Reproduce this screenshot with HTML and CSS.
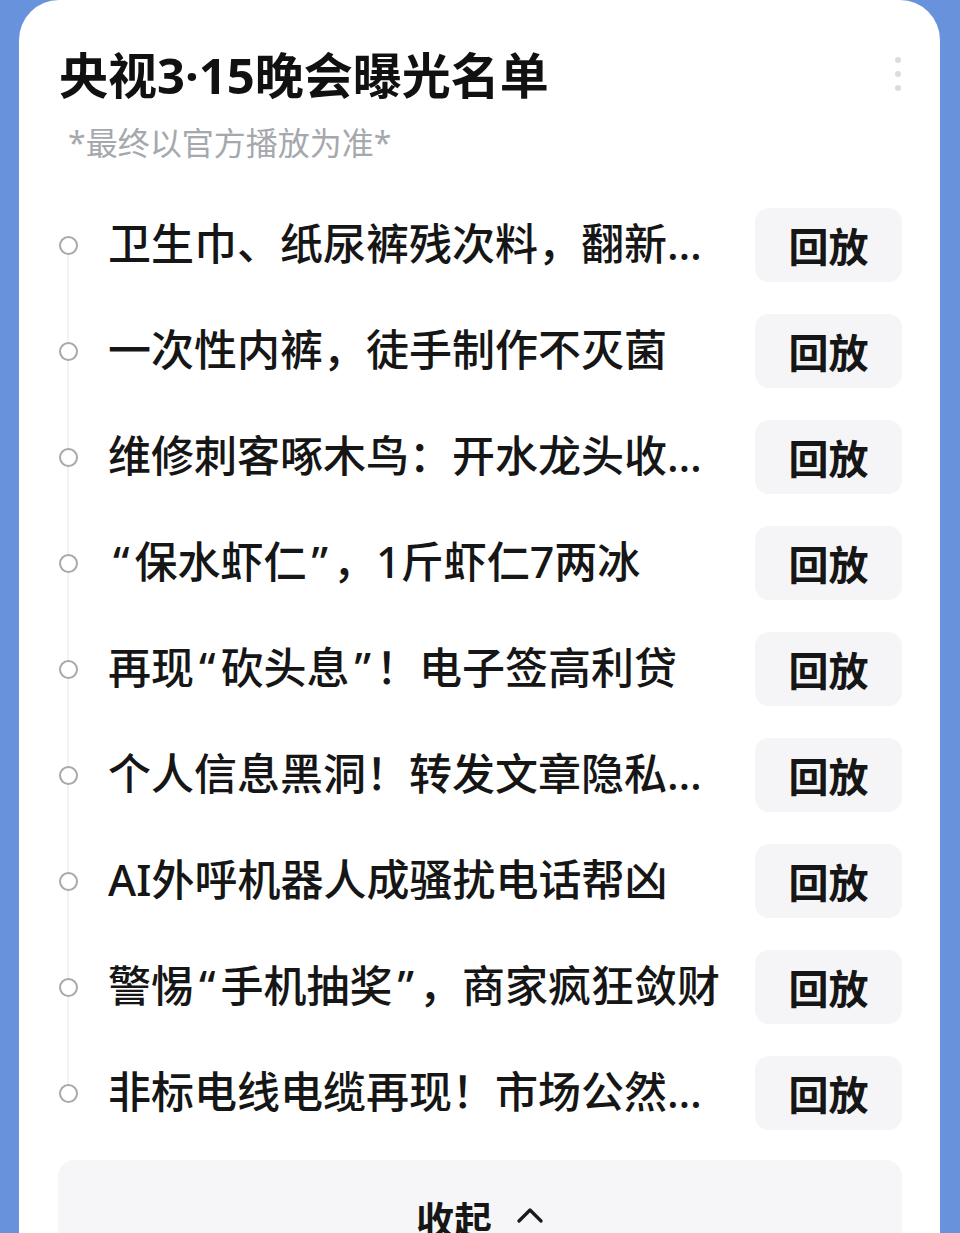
FILE: index.html
```html
<!DOCTYPE html>
<html lang="zh-CN">
<head>
    <meta charset="UTF-8">
    <meta name="viewport" content="width=device-width, initial-scale=1.0">
    <title>央视3·15晚会曝光名单</title>
    <link rel="stylesheet" href="styles.css">
</head>
<body>
    <div class="card">
        <div class="more">
            <span class="dot"></span>
            <span class="dot"></span>
            <span class="dot"></span>
        </div>
        <h1 class="title">央视3·15晚会曝光名单</h1>
        <p class="subtitle">*最终以官方播放为准*</p>

        <!-- 曝光条目 -->
        <ul class="list">
            <li class="item">
                <span class="bullet"></span>
                <span class="item-text">卫生巾、纸尿裤残次料，翻新再出售</span>
                <button class="replay">回放</button>
            </li>
            <li class="item">
                <span class="bullet"></span>
                <span class="item-text">一次性内裤，徒手制作不灭菌</span>
                <button class="replay">回放</button>
            </li>
            <li class="item">
                <span class="bullet"></span>
                <span class="item-text">维修刺客啄木鸟：开水龙头收费上千</span>
                <button class="replay">回放</button>
            </li>
            <li class="item">
                <span class="bullet"></span>
                <span class="item-text"><span class="q">“</span>保水虾仁<span class="q">”</span>，1斤虾仁7两冰</span>
                <button class="replay">回放</button>
            </li>
            <li class="item">
                <span class="bullet"></span>
                <span class="item-text">再现<span class="q">“</span>砍头息<span class="q">”</span>！电子签高利贷</span>
                <button class="replay">回放</button>
            </li>
            <li class="item">
                <span class="bullet"></span>
                <span class="item-text">个人信息黑洞！转发文章隐私泄露</span>
                <button class="replay">回放</button>
            </li>
            <li class="item">
                <span class="bullet"></span>
                <span class="item-text">AI外呼机器人成骚扰电话帮凶</span>
                <button class="replay">回放</button>
            </li>
            <li class="item">
                <span class="bullet"></span>
                <span class="item-text">警惕<span class="q">“</span>手机抽奖<span class="q">”</span>，商家疯狂敛财</span>
                <button class="replay">回放</button>
            </li>
            <li class="item">
                <span class="bullet"></span>
                <span class="item-text">非标电线电缆再现！市场公然售卖</span>
                <button class="replay">回放</button>
            </li>
        </ul>

        <button class="collapse">
            收起
            <svg class="chevron" viewBox="0 0 28 16" width="28" height="16">
                <path d="M3 14 L14 3 L25 14" fill="none" stroke="#1a1a1a" stroke-width="3.2" stroke-linecap="round" stroke-linejoin="round"/>
            </svg>
        </button>
    </div>
</body>
</html>
```

FILE: styles.css
```css
* {
    margin: 0;
    padding: 0;
    box-sizing: border-box;
}

/* Latin face first so quotes, digits and the ellipsis stay proportional */
body {
    font-family: "Noto Sans", "Noto Sans CJK SC", sans-serif;
    background: #6992dc;
    color: #161616;
    padding: 0 20px 0 19px;
}

.card {
    position: relative;
    background: #ffffff;
    border-radius: 40px;
    padding: 46px 38px 60px 39px;
    min-height: 1300px;
}

.more {
    position: absolute;
    top: 57px;
    right: 39px;
    display: flex;
    flex-direction: column;
    gap: 8px;
}

.dot {
    width: 6px;
    height: 6px;
    border-radius: 50%;
    background: #dcdcdf;
}

.title {
    font-size: 49px;
    line-height: 58px;
    font-weight: 700;
    color: #111111;
    padding-left: 1px;
}

.subtitle {
    margin-top: 17px;
    font-size: 32px;
    line-height: 44px;
    color: #a5a8ad;
    padding-left: 10px;
}

.list {
    list-style: none;
    margin-top: 27px;
}

.item {
    position: relative;
    display: flex;
    align-items: center;
    height: 106px;
}

/* faint timeline running through the bullets */
.item::before {
    content: "";
    position: absolute;
    left: 9px;
    top: 0;
    bottom: 0;
    width: 2px;
    background: #f2f2f3;
}

.item:first-child::before {
    top: 50%;
}

.item:last-child::before {
    bottom: 50%;
}

.bullet {
    position: relative;
    flex: none;
    width: 19px;
    height: 19px;
    border: 2.5px solid #a9a9ab;
    border-radius: 50%;
    background: #ffffff;
    margin-left: 1px;
    margin-right: 30px;
}

.item-text {
    flex: 1;
    min-width: 0;
    font-size: 43px;
    line-height: 56px;
    font-weight: 500;
    white-space: nowrap;
    overflow: hidden;
    text-overflow: ellipsis;
    margin-right: 26px;
    margin-top: -2px;
}

/* curly quotes get a little air on the outside */
.q {
    padding: 0 5px;
}

.replay {
    flex: none;
    width: 147px;
    height: 74px;
    border: none;
    border-radius: 14px;
    background: #f5f5f7;
    font-family: inherit;
    font-size: 40px;
    font-weight: 700;
    color: #161616;
    cursor: pointer;
}

.collapse {
    display: flex;
    align-items: center;
    justify-content: center;
    gap: 24px;
    width: 100%;
    height: 112px;
    margin-top: 14px;
    border: none;
    border-radius: 16px;
    background: #f6f6f8;
    font-family: inherit;
    font-size: 38px;
    font-weight: 700;
    color: #161616;
    padding-top: 2px;
    cursor: pointer;
}

.chevron {
    margin-top: -4px;
}
```
